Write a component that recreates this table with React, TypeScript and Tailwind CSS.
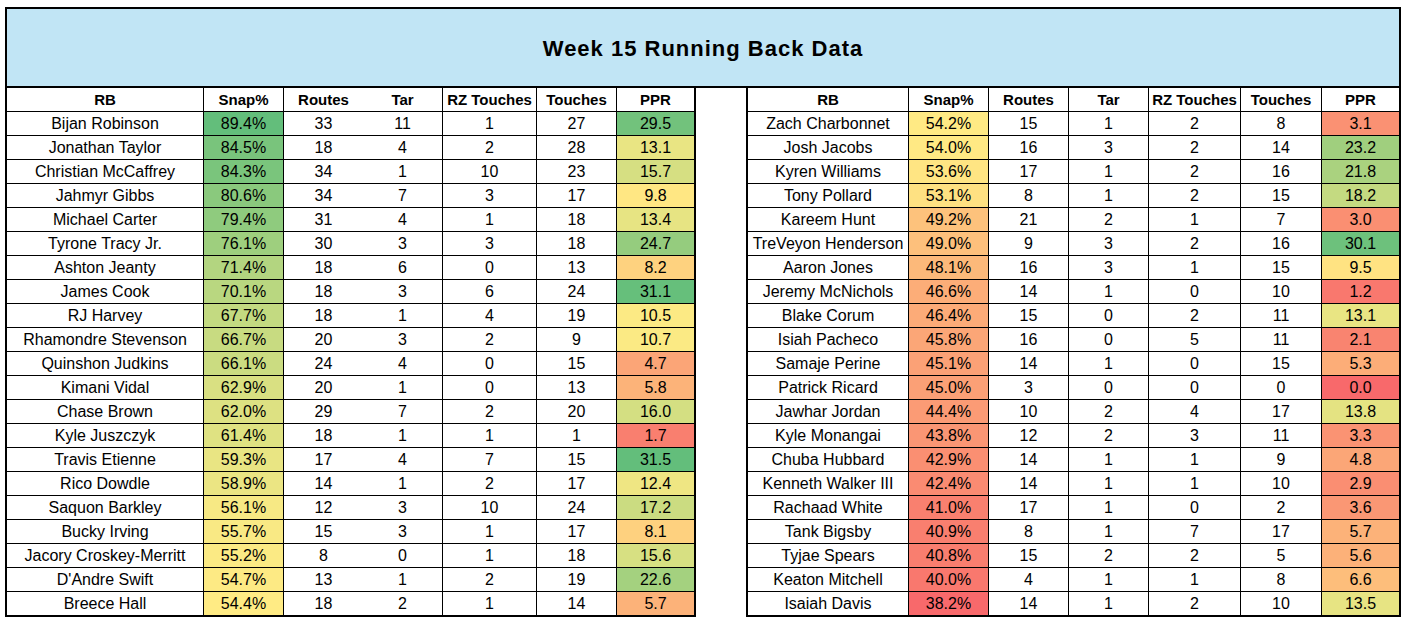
import type { CSSProperties } from "react";

type Row = [string, number, number, number, number, number, number];

const leftRows: Row[] = [
  ["Bijan Robinson", 89.4, 33, 11, 1, 27, 29.5],
  ["Jonathan Taylor", 84.5, 18, 4, 2, 28, 13.1],
  ["Christian McCaffrey", 84.3, 34, 1, 10, 23, 15.7],
  ["Jahmyr Gibbs", 80.6, 34, 7, 3, 17, 9.8],
  ["Michael Carter", 79.4, 31, 4, 1, 18, 13.4],
  ["Tyrone Tracy Jr.", 76.1, 30, 3, 3, 18, 24.7],
  ["Ashton Jeanty", 71.4, 18, 6, 0, 13, 8.2],
  ["James Cook", 70.1, 18, 3, 6, 24, 31.1],
  ["RJ Harvey", 67.7, 18, 1, 4, 19, 10.5],
  ["Rhamondre Stevenson", 66.7, 20, 3, 2, 9, 10.7],
  ["Quinshon Judkins", 66.1, 24, 4, 0, 15, 4.7],
  ["Kimani Vidal", 62.9, 20, 1, 0, 13, 5.8],
  ["Chase Brown", 62.0, 29, 7, 2, 20, 16.0],
  ["Kyle Juszczyk", 61.4, 18, 1, 1, 1, 1.7],
  ["Travis Etienne", 59.3, 17, 4, 7, 15, 31.5],
  ["Rico Dowdle", 58.9, 14, 1, 2, 17, 12.4],
  ["Saquon Barkley", 56.1, 12, 3, 10, 24, 17.2],
  ["Bucky Irving", 55.7, 15, 3, 1, 17, 8.1],
  ["Jacory Croskey-Merritt", 55.2, 8, 0, 1, 18, 15.6],
  ["D'Andre Swift", 54.7, 13, 1, 2, 19, 22.6],
  ["Breece Hall", 54.4, 18, 2, 1, 14, 5.7],
];

const rightRows: Row[] = [
  ["Zach Charbonnet", 54.2, 15, 1, 2, 8, 3.1],
  ["Josh Jacobs", 54.0, 16, 3, 2, 14, 23.2],
  ["Kyren Williams", 53.6, 17, 1, 2, 16, 21.8],
  ["Tony Pollard", 53.1, 8, 1, 2, 15, 18.2],
  ["Kareem Hunt", 49.2, 21, 2, 1, 7, 3.0],
  ["TreVeyon Henderson", 49.0, 9, 3, 2, 16, 30.1],
  ["Aaron Jones", 48.1, 16, 3, 1, 15, 9.5],
  ["Jeremy McNichols", 46.6, 14, 1, 0, 10, 1.2],
  ["Blake Corum", 46.4, 15, 0, 2, 11, 13.1],
  ["Isiah Pacheco", 45.8, 16, 0, 5, 11, 2.1],
  ["Samaje Perine", 45.1, 14, 1, 0, 15, 5.3],
  ["Patrick Ricard", 45.0, 3, 0, 0, 0, 0.0],
  ["Jawhar Jordan", 44.4, 10, 2, 4, 17, 13.8],
  ["Kyle Monangai", 43.8, 12, 2, 3, 11, 3.3],
  ["Chuba Hubbard", 42.9, 14, 1, 1, 9, 4.8],
  ["Kenneth Walker III", 42.4, 14, 1, 1, 10, 2.9],
  ["Rachaad White", 41.0, 17, 1, 0, 2, 3.6],
  ["Tank Bigsby", 40.9, 8, 1, 7, 17, 5.7],
  ["Tyjae Spears", 40.8, 15, 2, 2, 5, 5.6],
  ["Keaton Mitchell", 40.0, 4, 1, 1, 8, 6.6],
  ["Isaiah Davis", 38.2, 14, 1, 2, 10, 13.5],
];

const headers = ["RB", "Snap%", "Routes", "Tar", "RZ Touches", "Touches", "PPR"];

// excel 3-colour scale: red -> yellow (median) -> green
const RED = [248, 105, 107];
const YELLOW = [255, 235, 132];
const GREEN = [99, 190, 123];

function scaleFor(values: number[]) {
  const sorted = [...values].sort((a, b) => a - b);
  const n = sorted.length;
  const mid = n % 2 ? sorted[(n - 1) / 2] : (sorted[n / 2 - 1] + sorted[n / 2]) / 2;
  const min = sorted[0];
  const max = sorted[n - 1];
  return (v: number): CSSProperties => {
    let from = YELLOW;
    let to = GREEN;
    let t = 0;
    if (v <= mid) {
      from = RED;
      to = YELLOW;
      t = (v - min) / (mid - min);
    } else {
      t = (v - mid) / (max - mid);
    }
    const c = from.map((f, i) => Math.round(f + (to[i] - f) * t));
    return { backgroundColor: `rgb(${c[0]}, ${c[1]}, ${c[2]})` };
  };
}

const allRows = [...leftRows, ...rightRows];
const snapColor = scaleFor(allRows.map((r) => r[1]));
const pprColor = scaleFor(allRows.map((r) => r[6]));

type TableProps = {
  rows: Row[];
  widths: string[];
  // which columns draw a right border
  dividers: boolean[];
  className: string;
};

function DataTable({ rows, widths, dividers, className }: TableProps) {
  const cell = (i: number) =>
    `${widths[i]} flex h-full items-center justify-center pt-[1px] ${dividers[i] ? "border-r border-black" : ""}`;

  return (
    <div className={`border-x-2 border-b border-black ${className}`}>
      <div className="flex h-[24px] border-b border-black text-[15px] font-bold">
        {headers.map((h, i) => (
          <div key={h} className={`${cell(i)} whitespace-nowrap`}>
            {h}
          </div>
        ))}
      </div>
      {rows.map((r) => (
        <div key={r[0]} className="flex h-[24px] border-b border-black text-[16px]">
          <div className={`${cell(0)} whitespace-nowrap`}>{r[0]}</div>
          <div className={cell(1)} style={snapColor(r[1])}>
            {r[1].toFixed(1)}%
          </div>
          <div className={cell(2)}>{r[2]}</div>
          <div className={cell(3)}>{r[3]}</div>
          <div className={cell(4)}>{r[4]}</div>
          <div className={cell(5)}>{r[5]}</div>
          <div className={cell(6)} style={pprColor(r[6])}>
            {r[6].toFixed(1)}
          </div>
        </div>
      ))}
    </div>
  );
}

export default function App() {
  return (
    <div
      className="min-h-[627px] w-[1408px] bg-white pt-[7px] pl-[5px] text-black"
      style={{ fontFamily: '"Liberation Sans", Arial, sans-serif' }}
    >
      <div className="w-[1396px]">
        <div className="flex h-[81px] items-center justify-center border-2 border-black bg-[#c1e5f5] pt-[2px]">
          <h1 className="text-[22px] font-bold tracking-[1px]">Week 15 Running Back Data</h1>
        </div>
        <div className="flex justify-between">
          <DataTable
            rows={leftRows}
            className="w-[691px]"
            widths={["w-[197px]", "w-[80px]", "w-[79px]", "w-[80px]", "w-[94px]", "w-[80px]", "w-[77px]"]}
            dividers={[true, true, false, true, true, true, false]}
          />
          <DataTable
            rows={rightRows}
            className="w-[655px]"
            widths={["w-[161px]", "w-[80px]", "w-[80px]", "w-[80px]", "w-[92px]", "w-[81px]", "w-[77px]"]}
            dividers={[true, true, true, true, true, true, false]}
          />
        </div>
      </div>
    </div>
  );
}
